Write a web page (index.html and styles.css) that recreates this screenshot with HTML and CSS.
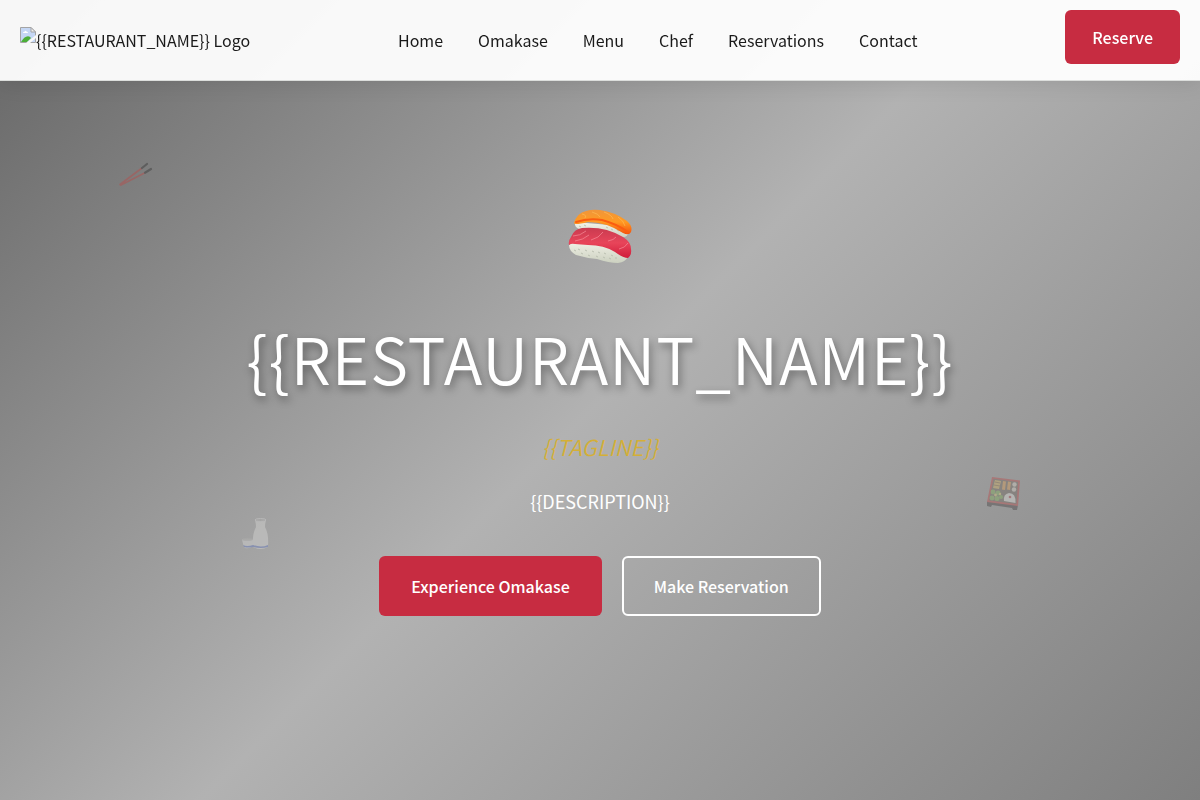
FILE: index.html
```html
<!DOCTYPE html>
<html lang="en">
<head>
<meta charset="utf-8">
<meta name="viewport" content="width=device-width, initial-scale=1">
<title>{{RESTAURANT_NAME}}</title>
<link rel="stylesheet" href="styles.css">
</head>
<body>
<header class="navbar">
  <a class="brand" href="#home">
    <svg class="brand-image" viewBox="0 0 16 16" aria-hidden="true">
      <path d="M.5 .5H11L15.500 5V15.500H.5Z" fill="#c5d7f5" stroke="#a4a4a4"/>
      <path d="M3 6Q3 4.500 4.500 4.700Q5.500 3 6.700 4.700Q8 4.700 8 6Z" fill="#fff"/>
      <path d="M1 15Q4 9.500 8 9.200Q10 9.200 11 11L7 15Z" fill="#4caf37"/>
      <path d="M6 16L16 8V11L10 16Z" fill="#f8f8f8"/>
      <path d="M11 .5V5H15.500Z" fill="#eee" stroke="#a4a4a4"/>
    </svg><span>{{RESTAURANT_NAME}} Logo</span>
  </a>
  <nav class="menu" aria-label="Main">
    <a href="#home">Home</a>
    <a href="#omakase">Omakase</a>
    <a href="#menu">Menu</a>
    <a href="#chef">Chef</a>
    <a href="#reservations">Reservations</a>
    <a href="#contact">Contact</a>
  </nav>
  <a class="button button-small" href="#reservations">Reserve</a>
</header>

<main class="hero" id="home">
  <svg class="float chopsticks" viewBox="0 0 40 30" aria-hidden="true">
    <path d="M4 24.500L26 8M5 25L29 12.700" stroke="#d8322f" stroke-width="1.700" stroke-linecap="round"/>
    <path d="M26 8L31 4M29 12.700L35 9" stroke="#161616" stroke-width="2.200" stroke-linecap="round"/>
  </svg>
  <svg class="float bento" viewBox="0 0 40 40" aria-hidden="true">
    <path d="M3 29L34 33L33 38L29 38L28 36L8 33L7 35L3 34Z" fill="#292426"/>
    <path d="M8 5L36 8.500L34 34L3 30Z" fill="#c92d2d"/>
    <path d="M9.500 6.800L34 10L32.500 32L5 28.500Z" fill="#5e5347"/>
    <path d="M11 8L17 9L15 17L9 16Z" fill="#e1b64a"/>
    <path d="M19 9L22 9.500L21 18L18 17.500ZM24 9.500L27 10L26 18L23 17.500Z" fill="#ef9b39"/>
    <path d="M11 10L16 11M10 13L16 14" stroke="#8c642c"/>
    <g fill="#e8ddce"><circle cx="30.500" cy="12.500" r="2.200"/><circle cx="30" cy="17.500" r="2.200"/></g>
    <g fill="#74b43e"><circle cx="9" cy="20" r="2.400"/><circle cx="14" cy="21" r="2.500"/><circle cx="8" cy="26" r="2.400"/><circle cx="13" cy="26.500" r="2.500"/><circle cx="17" cy="25" r="2"/></g>
    <g fill="#ead365"><circle cx="11.500" cy="23" r="1.400"/><circle cx="16" cy="22" r="1.200"/></g>
    <path d="M20 29Q19 22 25 21Q32 21 31.500 31Z" fill="#f6f4ee"/>
    <circle cx="26" cy="25" r="1.300" fill="#bd333c"/>
  </svg>
  <svg class="float sake" viewBox="0 0 32 36" aria-hidden="true">
    <path d="M15 4Q16 8 16 11Q12 18 13 31Q21 35 28 31Q29 18 25 11Q25 8 26 4Z" fill="#eeeeec"/>
    <ellipse cx="20.500" cy="4" rx="5.500" ry="1.400" fill="#aaa9a7" stroke="#eee"/>
    <path d="M13 29Q21 32 28 29V31Q21 33 13 31Z" fill="#4b68cf"/>
    <path d="M2 23H13V30Q10 33 5 32Q3 30 2 23Z" fill="#ececeb"/>
    <ellipse cx="7.500" cy="23.500" rx="5.500" ry="1.300" fill="#b9b9b7"/>
    <path d="M3 29Q7 31 13 29V31Q8 32 4 31Z" fill="#4b68cf"/>
  </svg>

  <div class="hero-content">
    <svg class="sushi" viewBox="0 0 64 56" aria-hidden="true">
      <defs>
        <linearGradient id="salmon" x1="0" y1="0" x2="0" y2="1"><stop offset="0" stop-color="#ef963c"/><stop offset=".5" stop-color="#ff9a22"/><stop offset="1" stop-color="#f4510b"/></linearGradient>
        <linearGradient id="tuna" x1="0" y1="0" x2="0" y2="1"><stop offset="0" stop-color="#c93b50"/><stop offset=".5" stop-color="#e8455a"/><stop offset="1" stop-color="#d01c3a"/></linearGradient>
        <linearGradient id="rice" x1="0" y1="0" x2="0" y2="1"><stop offset="0" stop-color="#f5f5eb"/><stop offset="1" stop-color="#ccd1c0"/></linearGradient>
      </defs>
      <path d="M7 13Q6 18 11 20L52 28Q60 29 60 24L53 17Z" fill="url(#rice)"/>
      <path d="M11 17l2 1m3-2 2 1m20 1 2 1m3 1 2 1m4 0 2 1m2 0 2 1" stroke="#c0c5b6" stroke-width="1"/>
      <path d="M6 14Q9 4 18 2Q24 0 32 1Q47 3 59 12Q65 17 63 23Q61 27 55 24Q38 13 20 13Q12 15 8 15Q6 15 6 14Z" fill="url(#salmon)"/>
      <path d="M14 5Q19 6 17 9M24 3Q31 5 32 8M36 3Q44 6 45 10M50 8Q56 12 57 17" fill="none" stroke="#ffc05a" stroke-width=".6"/>
      <path d="M8 13Q20 9 34 11Q49 15 60 23" fill="none" stroke="#fb5c10" stroke-width="2" stroke-linecap="round"/>
      <path d="M1 36Q1 42 8 46Q18 49 29 50Q41 54 50 54Q58 53 60 47L42 35L12 30Z" fill="url(#rice)"/>
      <path d="M6 41l2 1m2-2 2 1m1 3 2 1m2-4 2 1m1 4 2 1m2-5 2 1m2 4 2 1m0-5 2 1m3 4 2 1m-1-5 2 1m3 4 2 1m0-4 2 1m2 2 2 0" stroke="#bbc0b1" stroke-width="1" fill="none"/>
      <path d="M1 36Q0 32 3 28Q6 20 14 19Q37 17 55 28Q63 33 63 40Q64 46 60 49Q55 49 47 43Q36 36 20 36L7 35Q3 34 1 36Z" fill="url(#tuna)"/>
      <path d="M5 27Q12 27 18 22M7 32Q15 31 21 26M23 31Q31 29 35 23M40 32Q46 31 48 28M51 40Q57 39 60 34" fill="none" stroke="#f78c98" stroke-width=".7"/>
    </svg>
    <h1 class="title">{{RESTAURANT_NAME}}</h1>
    <p class="tagline">{{TAGLINE}}</p>
    <p class="description">{{DESCRIPTION}}</p>
    <div class="actions">
      <a class="button" href="#omakase">Experience Omakase</a>
      <a class="button button-outline" href="#reservations">Make Reservation</a>
    </div>
  </div>
</main>
</body>
</html>
```
FILE: styles.css
```css
* {
  box-sizing: border-box;
}

body {
  margin: 0;
  color: #1a1a1a;
  font-family: "Noto Sans CJK JP", "Noto Sans", sans-serif;
  font-size: 16px;
  line-height: 28px;
}

a {
  color: inherit;
  text-decoration: none;
}

.navbar {
  position: fixed;
  z-index: 10;
  inset: 0 0 auto;
  display: flex;
  align-items: center;
  justify-content: space-between;
  min-height: 81px;
  padding: 0 20px;
  background: rgba(255, 255, 255, 0.95);
  border-bottom: 1px solid #dcdedc;
  box-shadow: 0 2px 20px rgba(0, 0, 0, 0.1);
}

.brand {
  display: flex;
  align-items: center;
}

.brand-image {
  width: 16px;
  height: 16px;
  margin-bottom: 10px;
}

.menu {
  display: flex;
  gap: 35px;
}

.button {
  padding: 16px 32px;
  border-radius: 6px;
  background: #c72c41;
  color: #fff;
  font-weight: 500;
}

.button-small {
  padding: 13px 27px;
  margin-bottom: 6px;
}

.button-outline {
  padding: 14px 30px;
  border: 2px solid #fff;
  background: transparent;
}

.hero {
  position: relative;
  display: flex;
  align-items: center;
  justify-content: center;
  min-height: 100vh;
  overflow: hidden;
  background: linear-gradient(135deg, #666 0%, #b2b2b2 50%, #7f7f7f 100%);
  color: #fff;
}

.hero-content {
  display: flex;
  flex-direction: column;
  align-items: center;
  padding: 24px 20px 0;
  text-align: center;
}

.sushi {
  width: 64px;
  height: 56px;
}

.title {
  margin: 52px 0 30px;
  font-size: 64px;
  font-weight: 350;
  line-height: 80px;
  letter-spacing: 1px;
  text-shadow: 2px 4px 8px rgba(0, 0, 0, 0.4);
}

.tagline {
  margin: 0 0 20px;
  color: #d4af37;
  font-size: 22px;
  font-style: italic;
  font-weight: 350;
  line-height: 38px;
}

.description {
  margin: 0 0 39px;
  font-size: 18px;
  line-height: 32px;
}

.actions {
  display: flex;
  flex-wrap: wrap;
  justify-content: center;
  gap: 20px;
}

.float {
  position: absolute;
  opacity: 0.3;
  fill: none;
}

.chopsticks {
  top: 20%;
  left: 10%;
  width: 40px;
  height: 30px;
  margin-left: -4px;
}

.bento {
  bottom: 36%;
  right: 15%;
  width: 40px;
  height: 40px;
  margin-right: -4px;
}

.sake {
  bottom: 31%;
  left: 20%;
  width: 32px;
  height: 36px;
}
```
